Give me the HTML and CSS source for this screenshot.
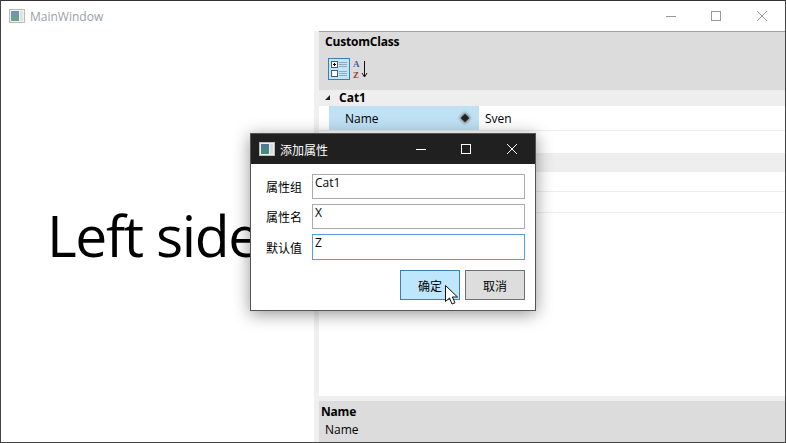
FILE: index.html
```html
<!DOCTYPE html>
<html lang="zh">
<head>
<meta charset="utf-8">
<title>MainWindow</title>
<link rel="stylesheet" href="styles.css">
</head>
<body>
<div class="window">
  <header class="titlebar">
    <svg class="appicon dim" viewBox="0 0 16 14"><defs><linearGradient id="g1" x1="0" y1="0" x2="0" y2="1"><stop offset="0" stop-color="#52759f"/><stop offset="1" stop-color="#3f9270"/></linearGradient></defs><rect x=".5" y=".5" width="15" height="13" fill="#eee" stroke="#aaa"/><rect x="2" y="2" width="8" height="10" fill="url(#g1)"/><rect x="11" y="2" width="3" height="10" fill="#d5dcdc"/></svg>
    <span class="wintitle">MainWindow</span>
    <div class="caption light">
      <svg viewBox="0 0 46 30"><path d="M19 15.500h10" stroke="#999" fill="none"/></svg>
      <svg viewBox="0 0 46 30"><rect x="18.500" y="10.500" width="9" height="9" stroke="#999" fill="none"/></svg>
      <svg viewBox="0 0 46 30"><path d="M18 10l10 10M28 10l-10 10" stroke="#999" fill="none"/></svg>
    </div>
  </header>
  <main class="content">
    <section class="left"><span class="bigtext">Left side</span></section>
    <div class="splitter"></div>
    <section class="right">
      <div class="grid-head">
        <div class="classname">CustomClass</div>
        <div class="tools">
          <span class="toolbtn">
            <svg viewBox="0 0 20 20" width="20" height="20"><rect x="2.500" y="2.500" width="6" height="6" fill="#fff" stroke="#4a5a66"/><path d="M4 5.500h3M5.500 4v3M4 14.500h3M5.500 13v3" stroke="#000"/><rect x="2.500" y="11.500" width="6" height="6" fill="#fff" stroke="#4a5a66"/><path d="M10 3.500h8M10 5.500h8M10 7.500h8M10 12.500h8M10 14.500h8M10 16.500h8" stroke="#9aa7b0"/></svg>
          </span>
          <svg class="sorticon" viewBox="0 0 20 20" width="20" height="20"><text class="az"><tspan x="2" y="8" class="blue">A</tspan><tspan x="2" y="18.500" class="red">Z</tspan></text><path d="M13.500 2v15M11 14l2.500 4 2.500-4" stroke="#111" fill="none"/></svg>
        </div>
      </div>
      <div class="cat cat-first"><i class="tri"></i>Cat1</div>
      <div class="row row-a">
        <div class="key selected">Name<span class="diamond"></span></div>
        <div class="val">Sven</div>
      </div>
      <div class="row row-b"></div>
      <div class="cat cat-second"></div>
      <div class="row row-c"></div>
      <div class="row row-d"></div>
      <div class="spacer"></div>
      <div class="desc">
        <div class="desc-title">Name</div>
        <div class="desc-text">Name</div>
      </div>
    </section>
  </main>

  <div class="dialog">
    <header class="dlgbar">
      <svg class="appicon" viewBox="0 0 16 14"><rect x=".5" y=".5" width="15" height="13" fill="#eee" stroke="#bbb"/><rect x="2" y="2" width="8" height="10" fill="url(#g1)"/><rect x="11" y="2" width="3" height="10" fill="#d5dcdc"/></svg>
      <span class="dlgtitle">添加属性</span>
      <div class="caption dark">
        <svg viewBox="0 0 46 30"><path d="M19 15.500h10" stroke="#fff" fill="none"/></svg>
        <svg viewBox="0 0 46 30"><rect x="18.500" y="10.500" width="9" height="9" stroke="#fff" fill="none"/></svg>
        <svg viewBox="0 0 46 30"><path d="M18 10l10 10M28 10l-10 10" stroke="#fff" fill="none"/></svg>
      </div>
    </header>
    <div class="dlgbody">
      <div class="field"><label>属性组</label><div class="input">Cat1</div></div>
      <div class="field"><label>属性名</label><div class="input">X</div></div>
      <div class="field"><label>默认值</label><div class="input focus">Z</div></div>
      <div class="buttons">
        <div class="btn primary">确定</div>
        <div class="btn">取消</div>
      </div>
    </div>
    <svg class="cursor" viewBox="0 0 14 21" width="14" height="21"><path d="M.5.500v16l4-3.500 2.500 6 3-1.200-2.600-5.800h5.100z" fill="#fff" stroke="#111"/></svg>
  </div>
</div>
</body>
</html>
```
FILE: styles.css
```css
* { box-sizing: border-box; }
html, body { margin: 0; padding: 0; background: #fff; }
body { width: 786px; height: 443px; overflow: hidden; font-family: "Open Sans", "Noto Sans CJK SC", sans-serif; color: #000; }
.window { position: relative; width: 786px; height: 443px; border: 1px solid #444; border-top-color: #333; display: flex; flex-direction: column; }
.titlebar { height: 30px; flex: none; display: flex; align-items: center; padding-left: 8px; background: #fff; }
.appicon { width: 16px; height: 14px; flex: none; }
.dim { opacity: .8; }
.wintitle { margin-left: 5px; font-size: 12px; color: #9a9fa8; }
.caption { margin-left: auto; display: flex; height: 30px; }
.caption svg { width: 46px; height: 30px; display: block; }

.content { flex: 1; display: flex; min-height: 0; }
.left { width: 313px; flex: none; overflow: hidden; display: flex; align-items: center; position: relative; }
.bigtext { font-size: 57px; white-space: nowrap; margin-left: 46px; margin-bottom: 4px; letter-spacing: -1.4px; font-family: "Open Sans", sans-serif; }
.splitter { width: 5px; flex: none; background: #f0f0f0; }
.right { flex: 1; display: flex; flex-direction: column; min-width: 0; border-top: 1px solid #a0a0a0; }
.grid-head { height: 58px; flex: none; background: #dcdcdc; padding: 2px 0 0 6px; }
.classname { font-size: 12px; font-weight: 700; line-height: 16px; letter-spacing: -.2px; }
.tools { display: flex; align-items: center; margin-top: 8px; gap: 1px; padding-left: 3px; }
.toolbtn { width: 22px; height: 22px; border: 1px solid #3c7fb1; background: #bee6fd; display: flex; align-items: center; justify-content: center; }
.sorticon { display: block; }
.az { font: 700 9px "Liberation Serif", serif; }
.blue { fill: #3f5f9f; }
.red { fill: #9a3a3a; }

.cat { background: #eeeeee; flex: none; position: relative; font-size: 12px; font-weight: 700; line-height: 16px; padding-left: 20px; }
.cat-first { height: 16px; }
.cat-second { height: 18px; }
.tri { position: absolute; left: 6px; top: 5px; width: 0; height: 0; border-left: 5px solid transparent; border-bottom: 5px solid #222; }
.row { flex: none; border-bottom: 1px solid #ededed; display: flex; background: #fff; }
.row-a { height: 25px; padding-left: 10px; }
.row-b { height: 23px; }
.row-c { height: 20px; }
.row-d { height: 21px; }
.key { width: 150px; display: flex; align-items: center; padding-left: 16px; font-size: 12px; position: relative; }
.selected { background: #bfe1f4; }
.diamond { position: absolute; right: 11px; top: 9px; width: 6px; height: 6px; background: #222; transform: rotate(45deg); box-shadow: 0 0 3px 1px #777; }
.val { display: flex; align-items: center; padding-left: 6px; font-size: 12px; }
.spacer { flex: 1; background: #fff; }
.desc { height: 46px; flex: none; background: #dcdcdc; border-top: 5px solid #efefef; padding: 2px 0 0 2px; font-size: 12px; line-height: 18px; }
.desc-title { font-weight: 700; letter-spacing: -.2px; }
.desc-text { padding-left: 4px; }

.dialog { position: absolute; left: 249px; top: 132px; width: 286px; height: 178px; border: 1px solid #555; background: #fff; box-shadow: 0 3px 16px rgba(0,0,0,.42); }
.dlgbar { height: 30px; background: #202020; display: flex; align-items: center; padding-left: 8px; color: #fff; }
.dlgtitle { margin-left: 5px; font-size: 12px; font-family: "Noto Sans CJK SC", sans-serif; }
.dlgbody { padding: 10px 10px 0 0; }
.field { display: flex; align-items: center; margin-bottom: 5px; }
.field label { width: 61px; flex: none; text-align: right; padding-right: 10px; font-size: 12px; font-family: "Noto Sans CJK SC", sans-serif; }
.input { flex: 1; height: 25px; border: 1px solid #ababab; padding: 0 2px; font-size: 12px; line-height: 16px; }
.focus { border-color: #569de5; height: 26px; }
.buttons { display: flex; justify-content: flex-end; gap: 5px; margin-top: 10px; }
.btn { width: 60px; height: 30px; border: 1px solid #707070; background: #dddddd; display: flex; align-items: center; justify-content: center; font-size: 12px; font-family: "Noto Sans CJK SC", sans-serif; }
.primary { border-color: #3c7fb1; background: #bee6fd; }
.cursor { position: absolute; left: 194px; top: 151px; }
```
